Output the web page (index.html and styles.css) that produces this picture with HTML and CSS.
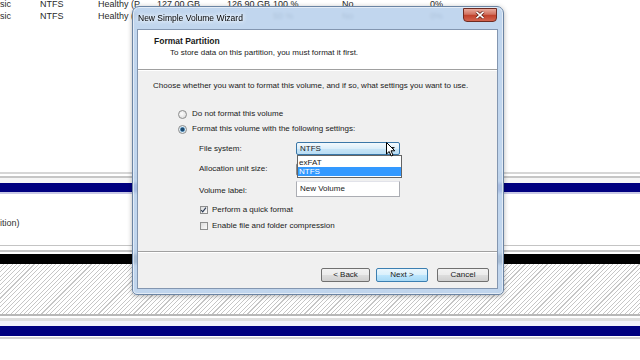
FILE: index.html
```html
<!DOCTYPE html>
<html lang="en">
<head>
    <meta charset="UTF-8">
    <meta name="viewport" content="width=device-width, initial-scale=1.0">
    <title>Disk Management - New Simple Volume Wizard</title>
    <link rel="stylesheet" href="styles.css">
</head>
<body>
    <div class="screen">
        <!-- volume list (top pane) -->
        <div class="vol-list">
            <div class="vol-row">
                <span>sic</span><span>NTFS</span><span>Healthy (P...</span><span>127.00 GB</span><span>126.90 GB</span><span>100 %</span><span>No</span><span>0%</span>
            </div>
            <div class="vol-row">
                <span>sic</span><span>NTFS</span><span>Healthy (P...</span><span></span><span></span><span>50 %</span><span>No</span><span>0%</span>
            </div>
        </div>

        <!-- graphical disk view (bottom pane) -->
        <div class="disk-map">
            <div class="rule-a"></div>
            <div class="gap2"></div>
            <div class="rule-b"></div>
            <div class="pad-grey"></div>
            <div class="bar-navy"></div>
            <div class="rule-lav"></div>
            <div class="part-body">ition)</div>
            <div class="rule-c"></div>
            <div class="gap4"></div>
            <div class="rule-b"></div>
            <div class="gap2"></div>
            <div class="bar-black"></div>
            <div class="hatch"></div>
            <div class="rule-d"></div>
            <div class="gap2"></div>
            <div class="rule-e"></div>
            <div class="pad-lav"></div>
            <div class="bar-navy tall"></div>
            <div class="gap1"></div>
            <div class="rule-f"></div>
        </div>

        <!-- wizard window -->
        <div class="wizard">
            <div class="wiz-titlebar">
                <span class="wiz-caption">New Simple Volume Wizard</span>
                <span class="wiz-close">
                    <svg width="10" height="8" viewBox="0 0 10 8">
                        <path d="M1.5 0.8 L8.5 7.2 M8.5 0.8 L1.5 7.2" stroke="#5a1b12" stroke-width="3"/>
                        <path d="M1.5 0.8 L8.5 7.2 M8.5 0.8 L1.5 7.2" stroke="#fff" stroke-width="1.6"/>
                    </svg>
                </span>
            </div>
            <div class="wiz-client">
                <div class="wiz-header">
                    <div class="wiz-heading">Format Partition</div>
                    <div class="wiz-subheading">To store data on this partition, you must format it first.</div>
                </div>
                <div class="wiz-main">
                    <p class="intro">Choose whether you want to format this volume, and if so, what settings you want to use.</p>
                    <div class="opt first"><span class="radio"></span>Do not format this volume</div>
                    <div class="opt"><span class="radio checked"></span>Format this volume with the following settings:</div>
                    <div class="settings">
                        <span class="set-label">File system:</span>
                        <div class="combo hot">
                            <span>NTFS</span>
                            <span class="combo-arrow"></span>
                            <ul class="combo-list">
                                <li>exFAT</li>
                                <li class="sel">NTFS</li>
                            </ul>
                            <svg class="cursor" width="10" height="15" viewBox="0 0 10 15">
                                <path d="M0.5 0.5 L0.5 12 L3.2 9.5 L5.2 14 L7 13.2 L5 8.8 L8.8 8.8 Z" fill="#fff" stroke="#000" stroke-width="1" stroke-linejoin="round"/>
                            </svg>
                        </div>
                        <span class="set-label">Allocation unit size:</span>
                        <div class="combo"><span class="combo-arrow"></span></div>
                        <span class="set-label">Volume label:</span>
                        <div class="textbox">New Volume</div>
                    </div>
                    <div class="chk-row first">
                        <span class="check">
                            <svg width="8" height="8" viewBox="0 0 8 8"><path d="M1.4 4.2 L3.1 6.2 L6.8 1.2" fill="none" stroke="#2b3b55" stroke-width="1.3"/></svg>
                        </span>
                        Perform a quick format
                    </div>
                    <div class="chk-row"><span class="check"></span>Enable file and folder compression</div>
                </div>
                <div class="wiz-footer">
                    <span class="btn">&lt; Back</span>
                    <span class="btn default">Next &gt;</span>
                    <span class="btn cancel">Cancel</span>
                </div>
            </div>
        </div>
    </div>
</body>
</html>
```

FILE: styles.css
```css
body {
    margin: 0;
    font-family: "Liberation Sans", Arial, sans-serif;
    background: #fff;
}
.screen {
    position: relative;
    width: 640px;
    height: 360px;
    overflow: hidden;
}

/* volume list */
.vol-list {
    margin-top: -2px;
    font-size: 9px;
    color: #2a2a2a;
}
.vol-row {
    display: grid;
    grid-template-columns: 40px 58px 59px 70px 46px 69px 88px 1fr;
    height: 12px;
    line-height: 12px;
    white-space: nowrap;
}

/* disk map stripes */
.disk-map {
    margin-top: 150px;
}
.rule-a { height: 2px; background: #d6d6d6; }
.rule-b { height: 2px; background: #c6c6c6; }
.rule-c { height: 1px; background: #c4c4c4; }
.rule-d { height: 2px; background: #b8b8b8; }
.rule-e { height: 3px; background: #dedede; }
.rule-f { height: 2px; background: #d2d2d2; }
.rule-lav { height: 2px; background: #c9c9e6; }
.gap1 { height: 1px; }
.gap2 { height: 2px; }
.gap4 { height: 4px; }
.pad-grey { height: 5px; background: #f6f6f6; }
.pad-lav { height: 5px; background: #f2f2fa; }
.bar-navy { height: 9px; background: #000080; }
.bar-navy.tall { height: 10px; }
.bar-black { height: 10px; background: #000; }
.part-body {
    height: 51px;
    box-sizing: border-box;
    padding-top: 24px;
    font-size: 9px;
    line-height: 10px;
    color: #333;
}
.hatch {
    height: 50px;
    background: repeating-linear-gradient(135deg, #fff 0 2.3px, #c6c6c6 2.3px 3.1px);
}

/* wizard window */
.wizard {
    position: absolute;
    left: 132px;
    top: 6px;
    width: 372px;
    height: 289px;
    box-sizing: border-box;
    border: 1px solid #6b84a3;
    border-radius: 7px 7px 5px 5px;
    background: rgba(186, 210, 236, 0.9);
    backdrop-filter: blur(1.5px);
    box-shadow: inset 0 0 0 1px rgba(255, 255, 255, 0.55), 0 1px 5px rgba(0, 0, 0, 0.3);
    padding: 0 5px 5px 4px;
    display: flex;
    flex-direction: column;
    font-size: 8px;
    color: #1a1a1a;
}
.wiz-titlebar {
    height: 22px;
    display: flex;
    justify-content: space-between;
    align-items: center;
    padding-left: 1px;
}
.wiz-caption {
    font-size: 8.5px;
    color: #000;
    text-shadow: 0 0 4px #fff, 0 0 4px #fff;
}
.wiz-close {
    align-self: flex-start;
    margin-top: 1px;
    margin-right: 1px;
    width: 34px;
    height: 14px;
    box-sizing: border-box;
    border: 1px solid #6e2b22;
    border-radius: 0 0 4px 4px;
    background: linear-gradient(#e9a99b, #d1705e 45%, #c0402a 50%, #d3644f);
    display: flex;
    justify-content: center;
    align-items: center;
}
.wiz-client {
    flex: 1;
    border: 1px solid #8396b0;
    background: #f0f0f0;
    display: flex;
    flex-direction: column;
}
.wiz-header {
    height: 40px;
    box-sizing: border-box;
    background: #fff;
    border-bottom: 1px solid #a0a0a0;
    box-shadow: 0 1px 0 #fff;
    padding: 6px 0 0 16px;
}
.wiz-heading {
    font-weight: bold;
    font-size: 8.5px;
    line-height: 10px;
}
.wiz-subheading {
    margin: 2px 0 0 16px;
    line-height: 10px;
}
.wiz-main {
    flex: 1;
    padding: 11px 0 0 15px;
    line-height: 10px;
}
.intro {
    margin: 0;
}
.opt {
    display: flex;
    align-items: center;
    margin: 5px 0 0 25px;
}
.opt.first {
    margin-top: 18px;
}
.radio {
    width: 7px;
    height: 7px;
    border: 1px solid #8b8c8c;
    border-radius: 50%;
    background: radial-gradient(circle at 40% 40%, #fdfdfd, #d6d6d6);
    margin-right: 5px;
}
.radio.checked {
    background: radial-gradient(circle, #1e4a70 0 1.6px, #6fa3c8 2.2px, #e3eef5 3px);
}
.settings {
    display: grid;
    grid-template-columns: 97px 104px;
    grid-template-rows: 13px 14px 16px;
    row-gap: 7px;
    align-items: center;
    margin: 8px 0 0 46px;
}
.combo {
    position: relative;
    height: 13px;
    box-sizing: border-box;
    border: 1px solid #8c8c8c;
    border-radius: 2px;
    background: linear-gradient(#f5f5f5, #e2e2e2);
    display: flex;
    align-items: center;
    padding-left: 3px;
}
.combo.hot {
    border-color: #3a77a8;
    background: linear-gradient(#f3f9fd, #dbeefa 50%, #c8e5f7 51%, #b9ddf4);
    z-index: 2;
}
.combo-arrow {
    position: absolute;
    right: 4px;
    top: 4px;
    border-left: 3px solid transparent;
    border-right: 3px solid transparent;
    border-top: 3px solid #1a1a1a;
}
.combo-list {
    position: absolute;
    left: 0;
    top: 12px;
    width: 105px;
    box-sizing: border-box;
    margin: 0;
    padding: 2px 0 1px;
    list-style: none;
    background: #fff;
    border: 1px solid #646464;
}
.combo-list li {
    height: 9px;
    line-height: 9px;
    padding-left: 1px;
}
.combo-list li.sel {
    background: #3399ff;
    color: #fff;
}
.cursor {
    position: absolute;
    left: 89px;
    top: -1px;
}
.textbox {
    height: 16px;
    box-sizing: border-box;
    border: 1px solid #abadb3;
    border-top-color: #e2e3ea;
    background: #fff;
    padding-left: 3px;
    line-height: 14px;
    margin-top: -5px;
}
.chk-row {
    display: flex;
    align-items: center;
    margin: 6px 0 0 47px;
}
.chk-row.first {
    margin-top: 6px;
}
.check {
    width: 8px;
    height: 8px;
    box-sizing: border-box;
    border: 1px solid #8e8f8f;
    background: linear-gradient(135deg, #dcdcdc, #fbfbfb);
    margin-right: 4px;
    display: flex;
}
.check svg {
    margin: -1px 0 0 -1px;
}
.wiz-footer {
    height: 37px;
    box-sizing: border-box;
    border-top: 1px solid #a0a0a0;
    box-shadow: inset 0 1px 0 #fff;
    display: flex;
    justify-content: flex-end;
    padding: 16px 8px 0 0;
}
.btn {
    width: 49px;
    height: 14px;
    box-sizing: border-box;
    border: 1px solid #707070;
    border-radius: 2px;
    background: linear-gradient(#f2f2f2, #ebebeb 50%, #dddddd 51%, #cfcfcf);
    text-align: center;
    line-height: 12px;
}
.btn.default {
    width: 52px;
    margin-left: 6px;
    border-color: #3c7fb1;
    background: linear-gradient(#eaf6fd, #d9f0fc 50%, #bee6fd 51%, #a7d9f5);
}
.btn.cancel {
    width: 52px;
    margin-left: 9px;
}
```
